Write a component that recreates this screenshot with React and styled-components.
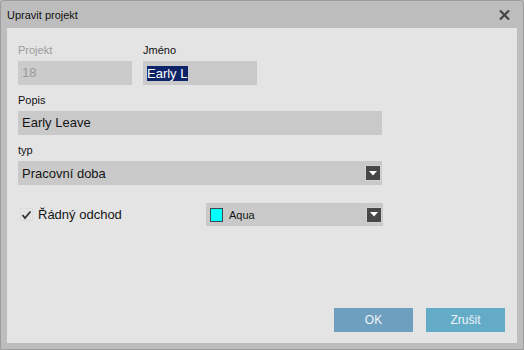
import React from "react";
import styled, { createGlobalStyle } from "styled-components";

const Global = createGlobalStyle`
  html, body { margin: 0; padding: 0; background: #bdbdbd; }
  body { font-family: "Liberation Sans", Arial, sans-serif; }
  * { box-sizing: border-box; }
`;

const Window = styled.div`
  width: 524px;
  height: 350px;
  display: flex;
  flex-direction: column;
  background: #bdbdbd;
  border: 1px solid #9c9c9c;
  border-radius: 4px 4px 0 0;
`;

const TitleBar = styled.div`
  height: 27px;
  flex: none;
  display: flex;
  align-items: center;
  justify-content: space-between;
  padding: 0 13px 0 6px;
  font-size: 11px;
  color: #111;
`;

const CloseBtn = styled.div`
  width: 11px;
  height: 10px;
  display: flex;
  align-items: center;
  justify-content: center;
  margin-top: 1px;
`;

const Content = styled.div`
  flex: 1;
  margin: 0 6px 6px 6px;
  background: #e4e4e4;
  display: flex;
  flex-direction: column;
  padding: 15px 12px 11px 11px;
`;

const Row = styled.div`
  display: flex;
  gap: ${(p) => (p.$gap === undefined ? 11 : p.$gap)}px;
  margin-bottom: ${(p) => (p.$mb === undefined ? 8 : p.$mb)}px;
  align-items: ${(p) => p.$align || "flex-start"};
`;

const Field = styled.div`
  display: flex;
  flex-direction: column;
  width: ${(p) => p.$w}px;
`;

const Label = styled.div`
  font-size: 11px;
  line-height: 14px;
  height: 14px;
  margin-bottom: 4px;
  color: ${(p) => (p.$disabled ? "#9b9b9b" : "#111")};
`;

const Input = styled.div`
  height: 24px;
  background: ${(p) => (p.$disabled ? "#cbcbcb" : "#c9c9c9")};
  color: ${(p) => (p.$disabled ? "#9a9a9a" : "#151515")};
  font-size: 13px;
  line-height: 24px;
  padding: 0 4px;
  white-space: nowrap;
  display: flex;
  align-items: center;
`;

const Selected = styled.span`
  background: #0d2468;
  color: #fff;
  line-height: 15px;
  padding-right: 1px;
`;

const Select = styled.div`
  height: ${(p) => p.$h || 24}px;
  width: ${(p) => p.$w}px;
  background: #c9c9c9;
  color: #151515;
  font-size: ${(p) => p.$fs || 13}px;
  display: flex;
  align-items: center;
  padding-left: 4px;
  padding-right: 2px;
`;

const SelectText = styled.div`
  flex: 1;
  display: flex;
  align-items: center;
  gap: 6px;
`;

const Swatch = styled.div`
  width: 13px;
  height: 14px;
  background: #00ffff;
  border: 1px solid #3a4a4a;
`;

const DropBtn = styled.div`
  width: 14px;
  height: 14px;
  background: #474747;
  box-shadow: 0 0 0 1px #d2d2d2;
  display: flex;
  align-items: center;
  justify-content: center;
`;

const Check = styled.div`
  width: 188px;
  display: flex;
  align-items: center;
  gap: 5px;
  padding-left: 2px;
  font-size: 13px;
  color: #151515;
`;

const CheckBox = styled.div`
  width: 13px;
  height: 13px;
  display: flex;
  align-items: center;
  justify-content: center;
  border: 1px solid #dcdcdc;
`;

const Spacer = styled.div`
  flex: 1;
`;

const Footer = styled.div`
  display: flex;
  justify-content: flex-end;
  gap: 13px;
`;

const Button = styled.div`
  width: 79px;
  height: 24px;
  background: ${(p) => p.$bg};
  color: #eef4f8;
  font-size: 12px;
  display: flex;
  align-items: center;
  justify-content: center;
`;

const Arrow = () => (
  <svg width="8" height="5" viewBox="0 0 8 5">
    <polygon points="0,0 8,0 4,4.5" fill="#fff" />
  </svg>
);

export default function App() {
  return (
    <>
      <Global />
      <Window>
        <TitleBar>
          <span>Upravit projekt</span>
          <CloseBtn>
            <svg width="11" height="10" viewBox="0 0 11 10">
              <path d="M1 0.5 L10 9.5 M10 0.5 L1 9.5" stroke="#454545" strokeWidth="2.2" />
            </svg>
          </CloseBtn>
        </TitleBar>
        <Content>
          <Row>
            <Field $w={114}>
              <Label $disabled>Projekt</Label>
              <Input $disabled>18</Input>
            </Field>
            <Field $w={114}>
              <Label>Jméno</Label>
              <Input>
                <Selected>Early L</Selected>
              </Input>
            </Field>
          </Row>
          <Row>
            <Field $w={364}>
              <Label>Popis</Label>
              <Input>Early Leave</Input>
            </Field>
          </Row>
          <Row $mb={18}>
            <Field $w={364}>
              <Label>typ</Label>
              <Select $w={364}>
                <SelectText>Pracovní doba</SelectText>
                <DropBtn>
                  <Arrow />
                </DropBtn>
              </Select>
            </Field>
          </Row>
          <Row $align="center" $mb={0} $gap={0}>
            <Check>
              <CheckBox>
                <svg width="11" height="10" viewBox="0 0 11 10">
                  <path d="M1.5 5 L4 8 L9.5 1.5" stroke="#333" strokeWidth="1.8" fill="none" />
                </svg>
              </CheckBox>
              <span>Řádný odchod</span>
            </Check>
            <Select $w={177} $h={23} $fs={11}>
              <SelectText>
                <Swatch />
                <span>Aqua</span>
              </SelectText>
              <DropBtn>
                <Arrow />
              </DropBtn>
            </Select>
          </Row>
          <Spacer />
          <Footer>
            <Button $bg="#6e9fbf">OK</Button>
            <Button $bg="#63abc7">Zrušit</Button>
          </Footer>
        </Content>
      </Window>
    </>
  );
}
